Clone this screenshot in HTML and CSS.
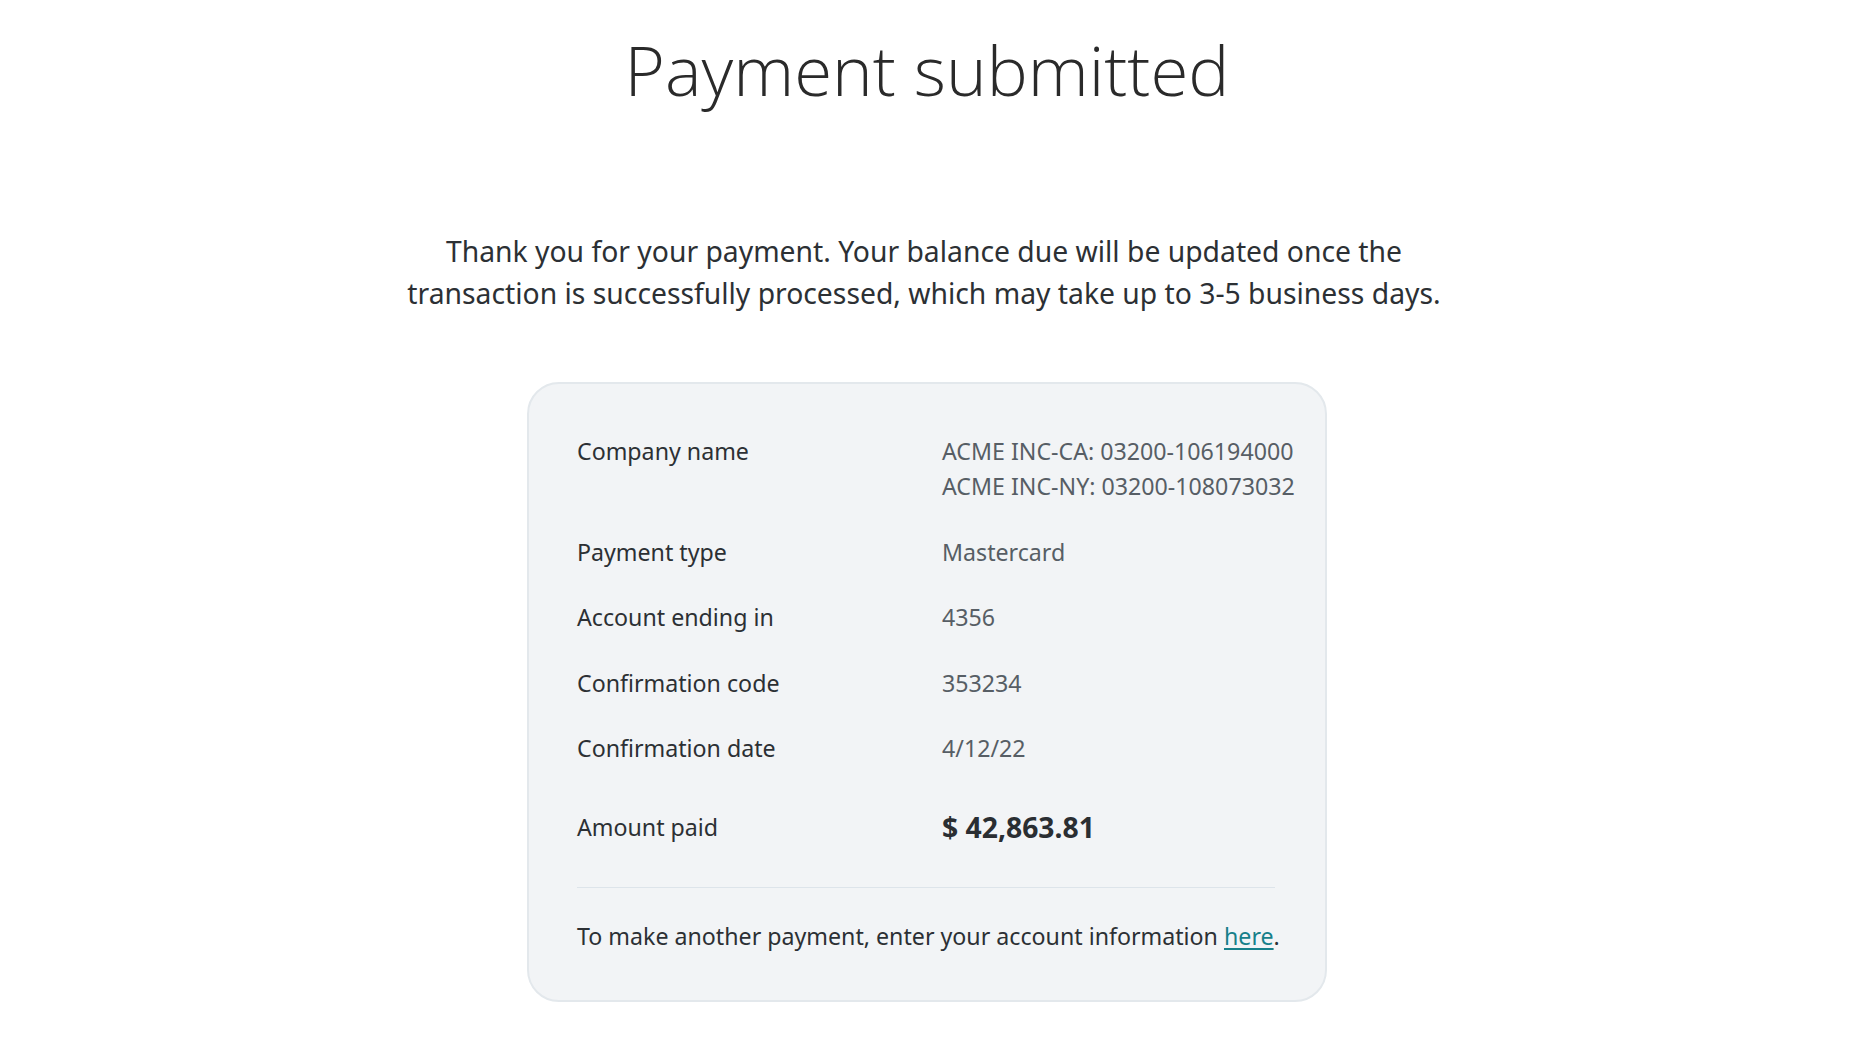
FILE: index.html
```html
<!DOCTYPE html>
<html lang="en">
<head>
<meta charset="utf-8">
<title>Payment submitted</title>
<link rel="stylesheet" href="styles.css">
</head>
<body>
<main class="page">
  <h1 class="title">Payment submitted</h1>
  <p class="intro">Thank you for your payment. Your balance due will be updated once the<br>transaction is successfully processed, which may take up to 3-5 business days.</p>
  <section class="card">
    <dl class="details">
      <dt>Company name</dt>
      <dd>ACME INC-CA: 03200-106194000<br>ACME INC-NY: 03200-108073032</dd>
      <dt>Payment type</dt>
      <dd>Mastercard</dd>
      <dt>Account ending in</dt>
      <dd>4356</dd>
      <dt>Confirmation code</dt>
      <dd>353234</dd>
      <dt>Confirmation date</dt>
      <dd>4/12/22</dd>
      <dt class="amount-label">Amount paid</dt>
      <dd class="amount">$ 42,863.81</dd>
    </dl>
    <hr class="divider">
    <p class="footer">To make another payment, enter your account information <a href="#" class="link">here</a>.</p>
  </section>
</main>
</body>
</html>
```

FILE: styles.css
```css
html, body {
  margin: 0;
  padding: 0;
  background: #ffffff;
}

body {
  font-family: "Noto Sans", "Open Sans", sans-serif;
  color: #2c3034;
}

.page {
  display: flex;
  flex-direction: column;
  align-items: center;
}

.title {
  margin: 26px 0 0;
  font-family: "Open Sans", "Noto Sans", sans-serif;
  font-weight: 300;
  font-size: 69px;
  line-height: 86px;
  color: #2a2a2a;
  letter-spacing: 0;
}

.intro {
  margin: 118px 6px 0 0;
  font-size: 28.3px;
  line-height: 42px;
  text-align: center;
  color: #2c3034;
}

.card {
  box-sizing: border-box;
  width: 800px;
  margin-top: 68px;
  padding: 50px 48px 46px 48px;
  background: #f2f4f6;
  border: 2px solid #e3e8ec;
  border-radius: 32px;
}

.details {
  display: grid;
  grid-template-columns: 365px 1fr;
  row-gap: 30.5px;
  margin: 0;
  font-size: 23.2px;
  line-height: 35px;
}

.details dt {
  margin: 0;
  color: #2c3034;
}

.details dd {
  margin: 0;
  color: #575e65;
  white-space: nowrap;
}

.details .amount-label {
  margin-top: 10px;
  line-height: 40px;
}

.details .amount {
  margin-top: 10px;
  font-size: 28.3px;
  font-weight: 700;
  line-height: 40px;
  color: #2a2e32;
}

.divider {
  margin: 40px 2px 0 0;
  border: 0;
  height: 1px;
  background: #dde4ea;
}

.footer {
  margin: 31px 0 0;
  font-size: 23.2px;
  line-height: 35px;
  color: #2c3034;
  white-space: nowrap;
}

.link {
  color: #17808a;
  text-decoration: underline;
  text-underline-offset: 3px;
}
```
